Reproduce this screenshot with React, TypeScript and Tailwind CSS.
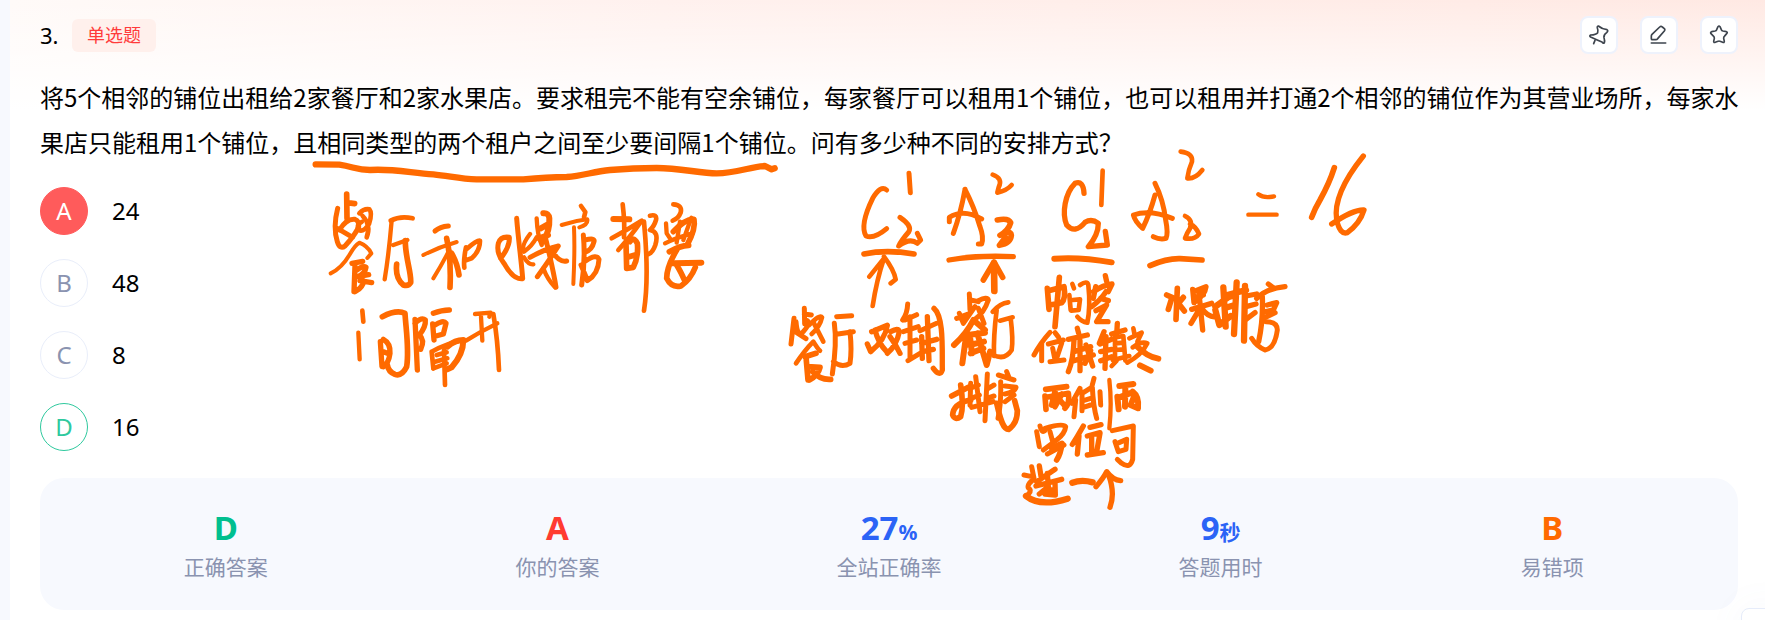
import React from "react";

type Stroke = [width: number, d: string];
type Sheet = { x: number; y: number; strokes: Stroke[] };

const sheets: Sheet[] = [
  {
    x: 300,
    y: 150,
    strokes: [
      [19, "M47 43L118 44C160 50 170 60 210 60C270 55 330 68 400 73C450 78 480 87 530 88L670 88Q740 82 800 81C850 78 880 64 930 60Q1000 54 1070 54C1140 54 1200 70 1250 70C1310 70 1350 50 1395 48L1415 58L1424 55"],
      [17, "M140 132L141 205M141 158L164 161"],
      [15, "M113 175C104 210 104 250 112 275Q120 300 135 288Q160 262 176 232Q178 212 165 208Q140 205 118 240M112 235L158 262"],
      [14, "M178 190Q192 175 208 178Q218 190 207 222Q190 248 176 240Q167 225 185 216M188 198Q214 225 200 262"],
      [12, "M92 370Q125 355 150 312Q165 285 178 278Q203 288 214 310L202 324"],
      [16, "M156 340L188 334M165 345L162 425M170 360Q190 345 198 352Q195 372 172 380L206 374M165 425Q190 412 190 392M180 392L215 398"],
      [14, "M272 212Q300 197 338 205"],
      [13, "M275 212C270 270 262 340 254 388M280 285L322 270"],
      [17, "M316 272C315 320 335 370 332 398Q325 410 310 405Q285 385 290 342"],
      [15, "M405 243Q420 230 445 228"],
      [12, "M370 315Q420 290 470 276M448 300Q425 345 400 385"],
      [17, "M440 265C450 310 452 370 450 412M455 310Q472 340 477 375"],
      [14, "M498 292Q490 330 493 353M500 297Q530 270 540 272Q540 302 515 325L500 330"],
      [15, "M650 205C655 270 665 340 668 386Q640 390 612 340Q588 310 595 280Q602 258 628 262Q630 290 602 325"],
      [14, "M187 482L190 515"],
      [13, "M175 548L179 628"],
      [17, "M247 500Q290 478 315 490C318 540 328 600 320 650Q305 680 285 673Q265 665 262 645"],
      [16, "M241 575L246 650M250 568Q272 580 270 610Q266 640 250 650M250 605L268 612"],
      [16, "M345 508L352 660M345 520Q365 500 376 510Q378 530 358 555Q375 570 362 598"],
      [16, "M400 490Q425 480 448 480M398 522L402 570M402 527Q430 508 438 520L430 552L408 558"],
      [18, "M442 590Q465 570 490 570Q490 612 455 652L442 658"],
      [14, "M395 605Q440 580 490 570M395 605L400 655"],
      [14, "M410 615L440 607M405 635L442 625M400 655L440 640"],
      [14, "M432 600L435 705"],
      [13, "M525 492L572 488L568 500M498 572Q540 545 592 520M543 500L547 572"],
      [14, "M580 492C590 550 595 610 597 660"],
    ],
  },
  {
    x: 500,
    y: 150,
    strokes: [
      [13, "M90 252Q62 288 72 305Q95 290 110 262M72 322Q86 345 100 343"],
      [13, "M110 205Q112 255 125 285M130 355Q142 388 165 412"],
      [18, "M130 190Q146 188 148 205Q150 240 130 275M122 235L146 222M118 265L144 255"],
      [15, "M90 322Q140 295 175 288Q145 335 112 380M138 270C150 320 162 370 168 412M155 300Q175 338 200 333"],
      [14, "M243 168L256 186L252 202"],
      [12, "M185 225Q225 212 262 208Q265 224 238 232M222 232C225 300 222 360 220 402"],
      [15, "M250 255C255 310 252 360 245 405M255 270Q286 262 282 275Q276 300 256 306M258 332Q290 310 297 328Q295 372 262 392M243 345L262 390"],
      [14, "M368 163Q375 220 372 262M335 265Q380 240 425 212Q390 262 355 300"],
      [18, "M340 207L388 208"],
      [17, "M378 280L380 355L400 352Q416 320 412 280Q400 258 390 275M382 322L405 315"],
      [14, "M432 215C440 300 445 400 432 482M450 197Q472 192 468 210Q462 230 450 240Q478 245 466 285Q458 308 446 312"],
      [14, "M520 163Q548 165 542 188Q535 206 518 212"],
      [13, "M498 220L500 250L512 268M540 215L530 278M574 203L550 270M495 280Q530 262 578 250"],
      [17, "M520 245Q555 206 582 208Q588 235 562 284M508 305Q540 287 566 286"],
      [17, "M530 300Q500 350 500 385Q515 415 543 408Q572 388 586 352M530 345Q545 370 552 388"],
      [18, "M520 340L604 338"],
    ],
  },
  {
    x: 770,
    y: 150,
    strokes: [
      [15, "M350 120Q332 104 308 145C282 198 276 238 288 258Q312 268 350 236M417 70L421 128"],
      [15, "M390 202Q428 228 416 246Q395 270 386 288Q420 262 442 280L452 270L442 250"],
      [17, "M282 312Q350 298 432 312"],
      [14, "M308 468Q320 390 342 325Q322 350 298 380M342 320Q372 360 377 388L362 400"],
      [15, "M585 118Q572 190 550 250M585 118Q612 170 630 230Q642 262 635 282L625 282M538 215L538 202Q580 175 635 207"],
      [14, "M668 74Q700 85 686 112L682 128Q710 122 725 105"],
      [17, "M682 210Q716 203 722 218Q716 240 690 256Q722 238 724 256Q722 280 688 286L706 262"],
      [16, "M537 330Q620 315 730 320"],
      [20, "M672 340L673 423"],
      [17, "M640 390L672 336L698 382"],
      [15, "M103 475L104 522M103 492L124 495M72 505L63 582M78 515Q82 565 100 545Q122 520 112 512M80 548L108 566"],
      [14, "M118 525Q150 492 156 502Q150 530 125 552M132 520L160 575M78 640Q105 600 130 575Q142 595 150 602"],
      [17, "M105 620L138 610M108 620L114 690M112 650L150 652Q145 675 118 690M128 665Q150 690 182 688"],
      [15, "M200 500L245 497M193 520C200 570 195 620 187 672M204 552L250 545M240 545Q246 600 240 640Q215 655 190 635"],
      [16, "M305 545L352 526Q345 570 302 605L292 582M315 540Q325 580 350 605M362 545Q385 532 388 545Q380 585 352 610M360 560Q375 580 390 610"],
      [15, "M413 462Q412 490 398 510M405 510L440 494M400 545L445 530M405 580L440 570M420 500L420 625M414 632L450 610M450 542L500 520"],
      [16, "M455 560L457 625M472 500L477 632M492 475C522 500 516 600 517 660Q510 682 490 655M455 580L500 568M458 605L490 598"],
      [15, "M598 432L600 480M602 450L625 455M568 490L580 520L615 470M560 505L600 490M625 452Q652 438 655 450Q642 490 612 510M625 475L642 520"],
      [18, "M552 585Q590 550 610 510L645 540M590 545L577 640M592 555L645 548M600 560L606 610M598 585L642 575M602 610L640 595M622 550L650 645L660 605"],
      [14, "M668 485Q690 460 715 457M680 480Q670 560 672 618M690 512L728 502M722 505Q730 570 725 600Q705 632 670 615"],
      [17, "M545 738L595 712M572 705Q582 770 572 800Q555 812 548 795Q550 760 602 750"],
      [15, "M617 680L630 785M652 672L645 812M600 715L625 705M604 745L628 735M650 718L672 705M650 745L672 738M605 772L670 755M602 700L600 765"],
      [15, "M710 665L716 680M685 675L732 690M692 695Q694 760 684 805M705 708L738 712Q735 725 705 732M705 755L732 735"],
      [17, "M680 760C692 812 700 838 716 838Q742 820 742 782L734 752"],
    ],
  },
  {
    x: 1000,
    y: 140,
    strokes: [
      [16, "M252 160Q250 120 225 130C195 160 185 220 200 255Q225 283 255 247Q275 235 295 250Q295 285 265 320L322 315L316 274"],
      [14, "M308 92L304 195"],
      [18, "M163 356Q240 350 335 367"],
      [15, "M465 130Q490 180 497 240Q505 280 498 295Q480 300 460 290M465 165Q450 220 428 265Q405 245 400 225Q450 208 517 235"],
      [17, "M142 445L147 508M145 452L192 440Q198 475 185 488L150 495M178 412L165 560"],
      [14, "M217 432L222 445M208 465L212 510M218 480L240 478L236 510L214 512M240 435Q262 420 265 435Q272 500 262 548Q245 545 232 530"],
      [16, "M316 407L320 425M280 455Q310 435 336 432L325 455M287 440L280 475M318 455Q302 480 275 500M302 475L325 482M288 512L320 495L290 545L324 545"],
    ],
  },
  {
    x: 1000,
    y: 300,
    strokes: [
      [15, "M150 97Q120 130 102 165M125 130L125 182M165 98L176 112M145 132L190 120M158 145L164 175M185 130L170 175M150 185L192 180"],
      [16, "M232 85L236 100M205 118L262 105M222 120Q220 180 205 215M240 122L240 212M222 155L272 140M222 182L280 165M258 135L278 198M272 152L255 190"],
      [16, "M312 95L298 130M300 132L335 118M302 155L335 148M318 110L315 205M302 182L335 170M352 70L350 105M335 102L375 90"],
      [14, "M345 110L345 180M345 112L370 108L376 182M345 130L372 128M345 150L372 148M338 180L388 168M335 198L350 182"],
      [14, "M400 85L404 105M388 115L425 98L412 125M398 142Q425 122 442 130Q425 165 382 188"],
      [18, "M410 138Q440 170 475 176M420 196L452 212"],
      [17, "M137 268L200 260M135 288L138 328M140 292L205 280Q210 310 195 325M165 275L155 315M186 282L165 320M175 295L195 318"],
      [15, "M240 265L215 310M227 300L222 350M246 275L246 332M250 278L275 262L282 235M277 262Q280 320 290 355M250 302L272 295M250 322L272 315M300 275L302 315"],
      [13, "M328 240Q336 310 328 385"],
      [18, "M358 258L400 252M352 290L356 328M358 292L395 278M376 262L375 320M398 275Q418 290 414 325L392 315L402 290"],
      [15, "M110 395L118 440M120 378Q125 400 135 392M135 385Q190 368 197 380Q195 400 170 420L130 450M150 395L158 425M142 462L192 435"],
      [17, "M155 445L186 430Q182 462 170 480"],
      [16, "M250 378Q232 410 217 433M237 408L232 462M270 382L303 374M262 408L300 398M275 405L275 460M300 400L290 455M262 465L310 458"],
      [15, "M337 392L400 378L398 478Q390 508 365 490L352 478M345 425L355 455L378 448L380 418L352 430"],
      [15, "M72 525L96 530M95 500L102 535M98 540Q75 560 90 568Q95 575 78 588"],
      [19, "M78 588Q120 622 203 596"],
      [16, "M118 498L124 535M110 545L165 508M142 520L145 560M108 558L185 538M145 560L118 582M165 545L166 585L135 582M140 572L165 568"],
      [19, "M217 548Q245 538 278 547"],
      [16, "M288 560Q310 535 320 515Q338 540 362 542M326 525Q346 580 330 622"],
    ],
  },
  {
    x: 1140,
    y: 130,
    strokes: [
      [14, "M122 65Q160 70 156 95Q145 120 142 145Q165 148 187 120M135 258Q160 270 150 295Q140 310 135 325Q165 330 177 312Q168 290 150 282"],
      [17, "M30 407Q80 385 120 386L186 390"],
      [13, "M355 193Q372 206 402 199M325 254L410 254"],
      [17, "M583 113Q568 160 540 210Q525 235 515 262"],
      [16, "M670 78C620 140 580 210 590 270Q600 315 622 308Q660 280 672 240Q640 238 575 282"],
      [17, "M112 475L108 568M80 495L96 502L85 538M130 502L115 520L133 543"],
      [16, "M158 478L162 518M160 485L198 470Q195 495 165 515M165 502L190 495M176 480L188 600M155 538L215 520M178 538L153 580M185 535Q205 562 225 560"],
      [19, "M250 472L257 590M226 530L270 498M226 540L238 585L272 558M290 457L282 612M264 502L285 495M262 532L285 525M315 468L312 632M262 495L318 480"],
      [16, "M318 498L350 492M318 530L348 522M318 568L345 548"],
      [16, "M385 462L402 475M350 505Q380 475 435 470M367 500Q370 570 356 635M382 525L410 518L400 540L378 545M376 562L405 548"],
      [15, "M378 575Q412 575 412 600Q405 655 375 660Q350 650 335 625"],
    ],
  },
];

function InkLayer() {
  return (
    <svg
      className="pointer-events-none absolute left-0 top-0 z-10"
      width="1765"
      height="620"
      viewBox="0 0 1765 620"
      fill="none"
      stroke="#ff6a00"
      strokeLinecap="round"
      strokeLinejoin="round"
      aria-hidden="true"
    >
      {sheets.map((sheet, i) => (
        <g key={i} transform={`translate(${sheet.x} ${sheet.y}) scale(${1 / 3})`}>
          {sheet.strokes.map(([width, d], j) => (
            <path key={j} d={d} strokeWidth={width} />
          ))}
        </g>
      ))}
    </svg>
  );
}

const tools = [
  {
    label: "固定",
    paths: ["M28 3Q40 13 54 14Q59 17 53 23Q43 30 45 38Q48 47 46 53Q43 57 39 51Q26 46 5 36Q0 33 5 30Q22 29 26 23Q28 15 25 9Q24 3 28 3Z", "M18 46L14 56"],
  },
  {
    label: "笔记",
    paths: ["M32 6Q36 2 40 6L46 11Q49 14 46 18L26 41Q24 44 20 44L10 44Q7 44 7 41L7 33Q7 30 9 28Z", "M7 54L50 54"],
  },
  {
    label: "收藏",
    paths: ["M27 5Q30 1 33 5L37 14Q38 17 42 18L52 20Q57 22 53 26L46 34Q44 36 44 40L46 49Q46 54 41 52L33 49Q30 47 27 49L19 52Q14 54 14 49L16 40Q16 36 14 34L6 26Q3 22 8 20L18 18Q22 17 23 14Z"],
  },
];

const options = [
  { key: "A", text: "24", look: "bg-[#ff5b5b] border-[#ff5b5b] text-white" },
  { key: "B", text: "48", look: "border-[#e9eefa] text-[#8a93b0]" },
  { key: "C", text: "8", look: "border-[#e9eefa] text-[#8a93b0]" },
  { key: "D", text: "16", look: "border-[#2fc99e] text-[#2fc99e]" },
];

const stats = [
  { value: "D", unit: "", label: "正确答案", color: "text-[#00bf8f]" },
  { value: "A", unit: "", label: "你的答案", color: "text-[#ff3b30]" },
  { value: "27", unit: "%", label: "全站正确率", color: "text-[#2b63f6]" },
  { value: "9", unit: "秒", label: "答题用时", color: "text-[#2b63f6]" },
  { value: "B", unit: "", label: "易错项", color: "text-[#ff6a00]" },
];

export default function App() {
  return (
    <div
      lang="zh-CN"
      className="relative min-h-screen overflow-hidden bg-[#f7f9fe] pl-[10px] font-['Noto_Sans','Noto_Sans_CJK_SC',sans-serif] text-black"
    >
      <main className="min-h-screen bg-white bg-[linear-gradient(176deg,#ffffff_96px,rgba(255,255,255,0)_220px),linear-gradient(to_bottom,rgba(255,255,255,0),#ffffff_110px),linear-gradient(100deg,#fffaf8,#fff1ee_35%,#ffe8e2)] bg-[size:0_0,auto,auto] pb-[10px] pl-[30px] pr-[27px] pt-4">
        <header className="flex h-[38px] items-center">
          <span className="w-8 text-[22px]">3.</span>
          <span className="flex h-[33px] w-[84px] items-center justify-center rounded-md bg-[#fff0ec] text-lg text-[#ff3b3b]">
            单选题
          </span>
          <div className="ml-auto flex gap-[22px]">
            {tools.map((tool) => (
              <button
                key={tool.label}
                type="button"
                aria-label={tool.label}
                className="flex size-[38px] items-center justify-center rounded-lg border-2 border-[#eef2fc] bg-white"
              >
                <svg className="size-5" viewBox="0 0 60 60" fill="none" stroke="#3d444d" strokeWidth="5" strokeLinecap="round" strokeLinejoin="round">
                  {tool.paths.map((d) => (
                    <path key={d} d={d} />
                  ))}
                </svg>
              </button>
            ))}
          </div>
        </header>

        <p className="-mr-2 mt-5 font-['Noto_Sans_CJK_SC',sans-serif] text-2xl leading-[45px]">
          将5个相邻的铺位出租给2家餐厅和2家水果店。要求租完不能有空余铺位，每家餐厅可以租用1个铺位，也可以租用并打通2个相邻的铺位作为其营业场所，每家水果店只能租用1个铺位，且相同类型的两个租户之间至少要间隔1个铺位。问有多少种不同的安排方式？
        </p>

        <div role="radiogroup" aria-label="选项" className="mt-[23px] flex flex-col items-start gap-6">
          {options.map((option) => (
            <label key={option.key} className="flex h-12 cursor-pointer items-center gap-6 text-2xl">
              <input type="radio" name="answer" value={option.key} defaultChecked={option.key === "A"} className="sr-only" />
              <span className={`flex size-12 items-center justify-center rounded-full border ${option.look}`}>{option.key}</span>
              <span>{option.text}</span>
            </label>
          ))}
        </div>

        <dl className="mt-[27px] grid h-[132px] grid-cols-5 rounded-3xl bg-[#f7f9fe] px-5 pt-[30px] text-center">
          {stats.map((stat) => (
            <div key={stat.label} className="flex flex-col-reverse justify-end">
              <dt className="text-[21px] leading-[30px] text-[#8a93b0]">{stat.label}</dt>
              <dd className={`text-[33px] font-bold leading-10 ${stat.color}`}>
                {stat.value}
                <span className="text-[21px]">{stat.unit}</span>
              </dd>
            </div>
          ))}
        </dl>
      </main>
      <div className="absolute -bottom-9 -right-6 size-12 rounded-lg border border-[#e6ecfa] bg-white shadow-[0_0_40px_rgba(120,140,200,0.05)]" />
      <InkLayer />
    </div>
  );
}
